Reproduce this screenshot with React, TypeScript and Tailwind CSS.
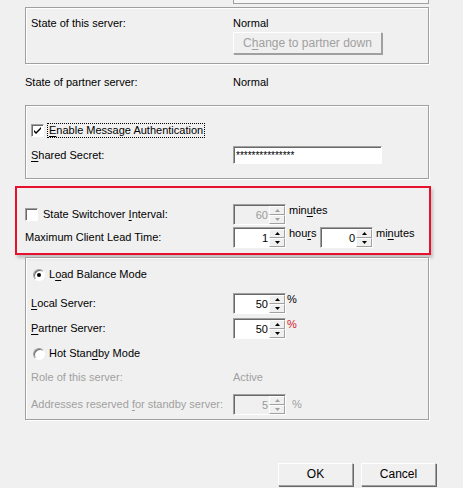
import type { ReactNode } from "react";

const font = { fontFamily: '"Liberation Sans", Arial, sans-serif' };

function U({ children }: { children: ReactNode }) {
  return <span className="underline underline-offset-[2px]">{children}</span>;
}

function GroupBox({ className, children }: { className: string; children: ReactNode }) {
  return (
    <div
      className={`ml-[25px] w-[404px] border border-[#a0a0a0] shadow-[inset_1px_1px_0_#fff,1px_1px_0_#fff] ${className}`}
    >
      {children}
    </div>
  );
}

function Arrow({ up, disabled }: { up?: boolean; disabled?: boolean }) {
  return (
    <div className="flex flex-1 items-center justify-center border-t border-l border-white border-b border-r border-b-[#a0a0a0] border-r-[#a0a0a0] bg-[#f0f0f0]">
      <svg width="5" height="3" viewBox="0 0 5 3">
        <path
          d={up ? "M2.5 0 L5 3 L0 3 Z" : "M0 0 L5 0 L2.5 3 Z"}
          fill={disabled ? "#a0a0a0" : "#000"}
        />
      </svg>
    </div>
  );
}

function Spinner({ value, disabled }: { value: string; disabled?: boolean }) {
  return (
    <div
      className={`flex h-[21px] w-[53px] border border-t-[#a0a0a0] border-l-[#a0a0a0] border-b-white border-r-white shadow-[inset_1px_1px_0_#696969] ${
        disabled ? "bg-[#f0f0f0]" : "bg-white"
      }`}
    >
      <div
        className={`flex flex-1 items-center justify-end pr-[1px] pt-[1px] text-[11px] ${
          disabled ? "text-[#9a9a9a]" : "text-black"
        }`}
      >
        {value}
      </div>
      <div className="flex w-[16px] flex-col pt-[1px]">
        <Arrow up disabled={disabled} />
        <Arrow disabled={disabled} />
      </div>
    </div>
  );
}

function Checkbox({ checked }: { checked?: boolean }) {
  return (
    <div className="flex h-[13px] w-[13px] items-center justify-center border border-t-[#a0a0a0] border-l-[#a0a0a0] border-b-white border-r-white bg-white shadow-[inset_1px_1px_0_#696969]">
      {checked && (
        <svg width="7" height="7" viewBox="0 0 7 7">
          <path d="M0 3 L2 5 L7 0 L7 2 L2 7 L0 5 Z" fill="#000" />
        </svg>
      )}
    </div>
  );
}

function Radio({ checked }: { checked?: boolean }) {
  return (
    <div className="flex h-[12px] w-[12px] items-center justify-center rounded-full border border-t-[#a0a0a0] border-l-[#a0a0a0] border-b-white border-r-white bg-white shadow-[inset_1px_1px_0_#696969]">
      {checked && <div className="h-[4px] w-[4px] rounded-full bg-black" />}
    </div>
  );
}

function Button({ children, disabled, className }: { children: ReactNode; disabled?: boolean; className?: string }) {
  return (
    <div
      className={`flex items-center justify-center border border-t-white border-l-white border-b-[#a0a0a0] border-r-[#a0a0a0] bg-[#f0f0f0] text-[12px] ${
        disabled ? "text-[#a0a0a0] shadow-[1px_1px_0_#a0a0a0]" : "text-black shadow-[1px_1px_0_#696969]"
      } ${className ?? ""}`}
    >
      {children}
    </div>
  );
}

export default function App() {
  return (
    <div
      className="flex h-[488px] w-[463px] flex-col overflow-hidden bg-[#f0f0f0] text-[11px] leading-[13px] text-black"
      style={font}
    >
      {/* bottom of a field cut off at the top */}
      <div className="ml-[233px] h-[4px] w-[196px] border-x border-b border-[#a0a0a0] bg-[#f7f7f7]" />

      <GroupBox className="mt-[3px] h-[57px] px-[5px]">
        <div className="flex pt-[9px]">
          <div className="w-[202px]">State of this server:</div>
          <div>Normal</div>
        </div>
        <Button disabled className="ml-[202px] mt-[2px] h-[22px] w-[149px]">
          C<U>h</U>ange to partner down
        </Button>
      </GroupBox>

      <div className="ml-[25px] mt-[12px] flex">
        <div className="w-[208px]">State of partner server:</div>
        <div>Normal</div>
      </div>

      <GroupBox className="mt-[16px] h-[74px] px-[5px]">
        <div className="flex h-[13px] items-center pt-[18px] box-content">
          <Checkbox checked />
          <span className="ml-[4px] px-[1px] outline outline-1 outline-dotted outline-black">
            <U>E</U>nable Message Authentication
          </span>
        </div>
        <div className="mt-[9px] flex h-[18px] items-center">
          <div className="w-[202px]">
            <U>S</U>hared Secret:
          </div>
          <div className="flex h-[18px] w-[149px] items-center border border-t-[#a0a0a0] border-l-[#a0a0a0] border-b-white border-r-white bg-white pl-[2px] text-[10px] shadow-[inset_1px_1px_0_#696969]">
            ***************
          </div>
        </div>
      </GroupBox>

      <div className="ml-[15px] mt-[7px] h-[69px] w-[416px] border-2 border-[#e8112d] pl-[8px] pt-[16px] shadow-[2px_3px_3px_rgba(0,0,0,0.2)]">
        <div className="flex h-[21px] items-center">
          <div className="flex w-[208px] items-center">
            <Checkbox />
            <span className="ml-[5px]">
              State Switchover <U>I</U>nterval:
            </span>
          </div>
          <Spinner value="60" disabled />
          <span className="ml-[3px] self-start">
            min<U>u</U>tes
          </span>
        </div>
        <div className="mt-[2px] flex h-[21px] items-center">
          <div className="w-[208px]">Maximum Client Lead Time:</div>
          <Spinner value="1" />
          <span className="ml-[3px] w-[31px] self-start">
            hou<U>r</U>s
          </span>
          <Spinner value="0" />
          <span className="ml-[3px] self-start">
            mi<U>n</U>utes
          </span>
        </div>
      </div>

      <GroupBox className="mt-[2px] h-[163px] px-[5px]">
        <div className="flex h-[13px] items-center pl-[2px] pt-[10px] box-content">
          <Radio checked />
          <span className="ml-[4px]">
            L<U>o</U>ad Balance Mode
          </span>
        </div>
        <div className="mt-[12px] flex h-[21px] items-center">
          <div className="w-[202px]">
            <U>L</U>ocal Server:
          </div>
          <Spinner value="50" />
          <span className="ml-[1px] self-start">%</span>
        </div>
        <div className="mt-[4px] flex h-[21px] items-center">
          <div className="w-[202px]">
            <U>P</U>artner Server:
          </div>
          <Spinner value="50" />
          <span className="ml-[1px] self-start text-[#d0202a]">%</span>
        </div>
        <div className="mt-[8px] flex h-[13px] items-center pl-[2px]">
          <Radio />
          <span className="ml-[4px]">
            Hot Stan<U>d</U>by Mode
          </span>
        </div>
        <div className="mt-[11px] flex text-[#a0a0a0]">
          <div className="w-[202px]">Role of this server:</div>
          <div>Active</div>
        </div>
        <div className="mt-[10px] flex h-[21px] items-center text-[#a0a0a0]">
          <div className="w-[202px]">
            Addresses reserved <U>f</U>or standby server:
          </div>
          <Spinner value="5" disabled />
          <span className="ml-[6px]">%</span>
        </div>
      </GroupBox>

      <div className="mt-[43px] flex">
        <Button className="ml-[278px] h-[23px] w-[75px]">OK</Button>
        <Button className="ml-[8px] h-[23px] w-[75px]">Cancel</Button>
      </div>
    </div>
  );
}
